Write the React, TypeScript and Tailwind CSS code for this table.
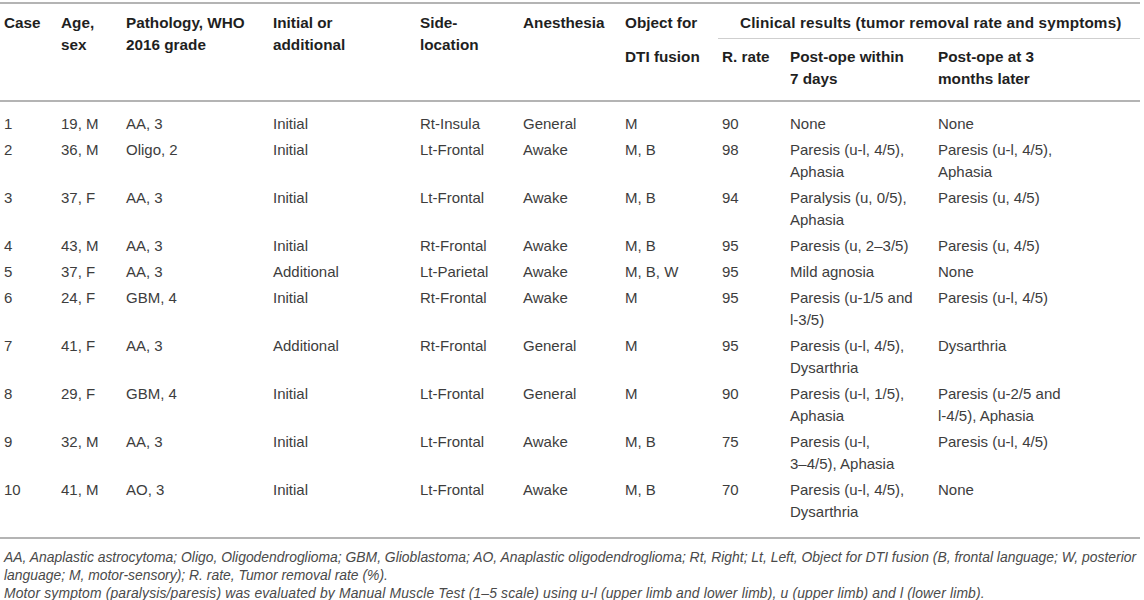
import React from "react";

type Row = {
  id: string;
  age: string;
  path: string;
  init: string;
  side: string;
  anes: string;
  obj: string;
  rate: string;
  week: string[];
  later: string[];
};

const rows: Row[] = [
  { id: "1", age: "19, M", path: "AA, 3", init: "Initial", side: "Rt-Insula", anes: "General", obj: "M", rate: "90", week: ["None"], later: ["None"] },
  { id: "2", age: "36, M", path: "Oligo, 2", init: "Initial", side: "Lt-Frontal", anes: "Awake", obj: "M, B", rate: "98", week: ["Paresis (u-l, 4/5),", "Aphasia"], later: ["Paresis (u-l, 4/5),", "Aphasia"] },
  { id: "3", age: "37, F", path: "AA, 3", init: "Initial", side: "Lt-Frontal", anes: "Awake", obj: "M, B", rate: "94", week: ["Paralysis (u, 0/5),", "Aphasia"], later: ["Paresis (u, 4/5)"] },
  { id: "4", age: "43, M", path: "AA, 3", init: "Initial", side: "Rt-Frontal", anes: "Awake", obj: "M, B", rate: "95", week: ["Paresis (u, 2–3/5)"], later: ["Paresis (u, 4/5)"] },
  { id: "5", age: "37, F", path: "AA, 3", init: "Additional", side: "Lt-Parietal", anes: "Awake", obj: "M, B, W", rate: "95", week: ["Mild agnosia"], later: ["None"] },
  { id: "6", age: "24, F", path: "GBM, 4", init: "Initial", side: "Rt-Frontal", anes: "Awake", obj: "M", rate: "95", week: ["Paresis (u-1/5 and", "l-3/5)"], later: ["Paresis (u-l, 4/5)"] },
  { id: "7", age: "41, F", path: "AA, 3", init: "Additional", side: "Rt-Frontal", anes: "General", obj: "M", rate: "95", week: ["Paresis (u-l, 4/5),", "Dysarthria"], later: ["Dysarthria"] },
  { id: "8", age: "29, F", path: "GBM, 4", init: "Initial", side: "Lt-Frontal", anes: "General", obj: "M", rate: "90", week: ["Paresis (u-l, 1/5),", "Aphasia"], later: ["Paresis (u-2/5 and", "l-4/5), Aphasia"] },
  { id: "9", age: "32, M", path: "AA, 3", init: "Initial", side: "Lt-Frontal", anes: "Awake", obj: "M, B", rate: "75", week: ["Paresis (u-l,", "3–4/5), Aphasia"], later: ["Paresis (u-l, 4/5)"] },
  { id: "10", age: "41, M", path: "AO, 3", init: "Initial", side: "Lt-Frontal", anes: "Awake", obj: "M, B", rate: "70", week: ["Paresis (u-l, 4/5),", "Dysarthria"], later: ["None"] },
];

function Lines({ items }: { items: string[] }) {
  return (
    <>
      {items.map((t, i) => (
        <div key={i}>{t}</div>
      ))}
    </>
  );
}

export default function App() {
  const th = "pl-[4px] pr-0 pt-[8px] text-left align-top font-bold whitespace-nowrap";

  return (
    <div className="w-[1144px] h-[600px] overflow-hidden bg-white font-['Liberation_Sans',Arial,sans-serif]">
      <div className="w-[1140px] pt-[2px]">
        <table className="w-[1140px] table-fixed border-collapse text-[15px] leading-[22px]">
          <colgroup>
            <col className="w-[57px]" />
            <col className="w-[65px]" />
            <col className="w-[147px]" />
            <col className="w-[147px]" />
            <col className="w-[103px]" />
            <col className="w-[102px]" />
            <col className="w-[97px]" />
            <col className="w-[68px]" />
            <col className="w-[148px]" />
            <col className="w-[206px]" />
          </colgroup>
          <thead className="text-[#1f1f1f] text-[15.3px] border-t-2 border-b-2 border-[#b4b4b4]">
            <tr>
              <th rowSpan={2} className={th}>Case</th>
              <th rowSpan={2} className={th}>Age,<br />sex</th>
              <th rowSpan={2} className={th}>Pathology, WHO<br />2016 grade</th>
              <th rowSpan={2} className={th}>Initial or<br />additional</th>
              <th rowSpan={2} className={th}>Side-<br />location</th>
              <th rowSpan={2} className={th}>Anesthesia</th>
              <th className={th + " pb-[4px]"}>Object for</th>
              <th colSpan={3} className="pl-[22px] pt-[8px] pb-[4px] text-left align-top font-bold whitespace-nowrap tracking-[0.15px] border-b border-[#cfcfcf]">
                Clinical results (tumor removal rate and symptoms)
              </th>
            </tr>
            <tr>
              <th className="pl-[4px] pt-[7px] pb-[10px] h-[62px] text-left align-top font-bold whitespace-nowrap">DTI fusion</th>
              <th className="pl-[4px] pt-[7px] pb-[10px] text-left align-top font-bold whitespace-nowrap">R. rate</th>
              <th className="pl-[4px] pt-[7px] pb-[10px] text-left align-top font-bold whitespace-nowrap">Post-ope within<br />7 days</th>
              <th className="pl-[4px] pt-[7px] pb-[10px] text-left align-top font-bold whitespace-nowrap">Post-ope at 3<br />months later</th>
            </tr>
          </thead>
          <tbody className="text-[#3d3d3d] border-b-2 border-[#b4b4b4]">
            {rows.map((r, i) => {
              const pad =
                i === 0 ? "pt-[11px] pb-[2px]" : i === rows.length - 1 ? "pt-[2px] pb-[14px]" : "py-[2px]";
              const td = `pl-[4px] align-top whitespace-nowrap ${pad}`;
              return (
                <tr key={r.id}>
                  <td className={td}>{r.id}</td>
                  <td className={td}>{r.age}</td>
                  <td className={td}>{r.path}</td>
                  <td className={td}>{r.init}</td>
                  <td className={td}>{r.side}</td>
                  <td className={td}>{r.anes}</td>
                  <td className={td}>{r.obj}</td>
                  <td className={td}>{r.rate}</td>
                  <td className={td}><Lines items={r.week} /></td>
                  <td className={td}><Lines items={r.later} /></td>
                </tr>
              );
            })}
          </tbody>
        </table>

        {/* footnotes */}
        <div className="pt-[9px] pl-[4px] text-[13.9px] leading-[18px] italic text-[#4a4a4a] whitespace-nowrap">
          <p>
            AA, Anaplastic astrocytoma; Oligo, Oligodendroglioma; GBM, Glioblastoma; AO, Anaplastic oligodendroglioma; Rt, Right; Lt, Left, Object for DTI fusion (B, frontal language; W, posterior
            <br />
            language; M, motor-sensory); R. rate, Tumor removal rate (%).
          </p>
          <p className="tracking-[0.15px]">
            Motor symptom (paralysis/paresis) was evaluated by Manual Muscle Test (1–5 scale) using u-l (upper limb and lower limb), u (upper limb) and l (lower limb).
          </p>
        </div>
      </div>
    </div>
  );
}
